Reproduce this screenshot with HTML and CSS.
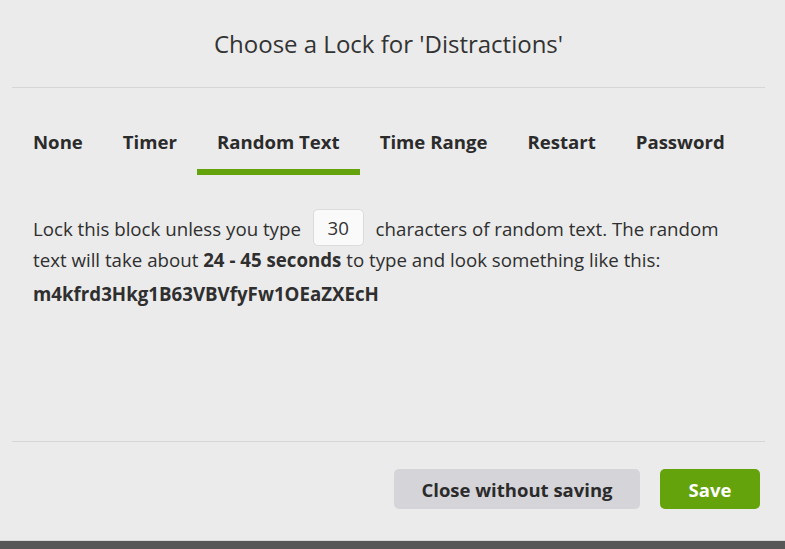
FILE: index.html
```html
<!DOCTYPE html>
<html>
<head>
<meta charset="utf-8">
<link rel="stylesheet" href="styles.css">
</head>
<body>
<div class="modal">
  <div class="header"><h1 class="title">Choose a Lock for 'Distractions'</h1></div>
  <div class="rule"></div>
  <div class="content">
    <nav class="tabs">
      <span class="tab">None</span>
      <span class="tab">Timer</span>
      <span class="tab active">Random Text</span>
      <span class="tab">Time Range</span>
      <span class="tab">Restart</span>
      <span class="tab">Password</span>
    </nav>
    <p class="desc">Lock this block unless you type <input class="num" type="text" value="30"> characters of random text. The random text will take about <b>24 - 45 seconds</b> to type and look something like this:</p>
    <div class="sample">m4kfrd3Hkg1B63VBVfyFw1OEaZXEcH</div>
  </div>
  <div class="rule"></div>
  <div class="footer">
    <button class="btn btn-grey">Close without saving</button>
    <button class="btn btn-green">Save</button>
  </div>
</div>
</body>
</html>
```
FILE: styles.css
```css
html, body {
  margin: 0;
  padding: 0;
}
body {
  background: #575757;
  font-family: "Open Sans", "Liberation Sans", sans-serif;
  color: #2f2f2f;
  height: 549px;
  overflow: hidden;
}
.modal {
  background: #ebebeb;
  height: 540px;
  border-bottom: 1px solid #d9d9d9;
  display: flex;
  flex-direction: column;
}
.header {
  height: 87px;
  display: flex;
  align-items: center;
  justify-content: center;
  padding-right: 8px;
}
.title {
  margin: 0;
  font-size: 24px;
  font-weight: 400;
  color: #333;
  padding-top: 0;
}
.rule {
  height: 1px;
  background: #d6d6d6;
  margin: 0 20px 0 12px;
}
.content {
  flex: 1;
  padding: 0 21px 0 13px;
}
.tabs {
  display: flex;
  margin-top: 28px;
}
.tab {
  font-size: 18.6px;
  font-weight: 700;
  line-height: 25px;
  padding: 13px 20px 15px;
  border-bottom: 6px solid transparent;
  color: #2b2b2b;
}
.tab.active {
  border-bottom-color: #65a30d;
}
.desc {
  margin: 38px 0 0 20px;
  font-size: 18.7px;
  line-height: 31px;
  max-width: 700px;
}
.num {
  width: 51px;
  height: 37px;
  box-sizing: border-box;
  border: 1px solid #dcdcdc;
  border-radius: 5px;
  background: #fafafa;
  font-family: inherit;
  font-size: 18.7px;
  color: #333;
  text-align: center;
  margin: -5px 7px -5px 7px;
  vertical-align: 1px;
  padding: 0;
}
.sample {
  margin: 3px 0 0 20px;
  font-size: 18.7px;
  font-weight: 700;
  line-height: 31px;
}
.footer {
  display: flex;
  justify-content: flex-end;
  gap: 20px;
  padding: 27px 25px 31px 0;
}
.btn {
  height: 40px;
  border: none;
  border-radius: 5px;
  font-family: inherit;
  font-size: 18.5px;
  font-weight: 700;
  padding: 0;
}
.btn-grey {
  width: 246px;
  background: #d5d5d9;
  color: #2b2b2b;
}
.btn-green {
  width: 100px;
  background: #64a30c;
  color: #fff;
}
```
